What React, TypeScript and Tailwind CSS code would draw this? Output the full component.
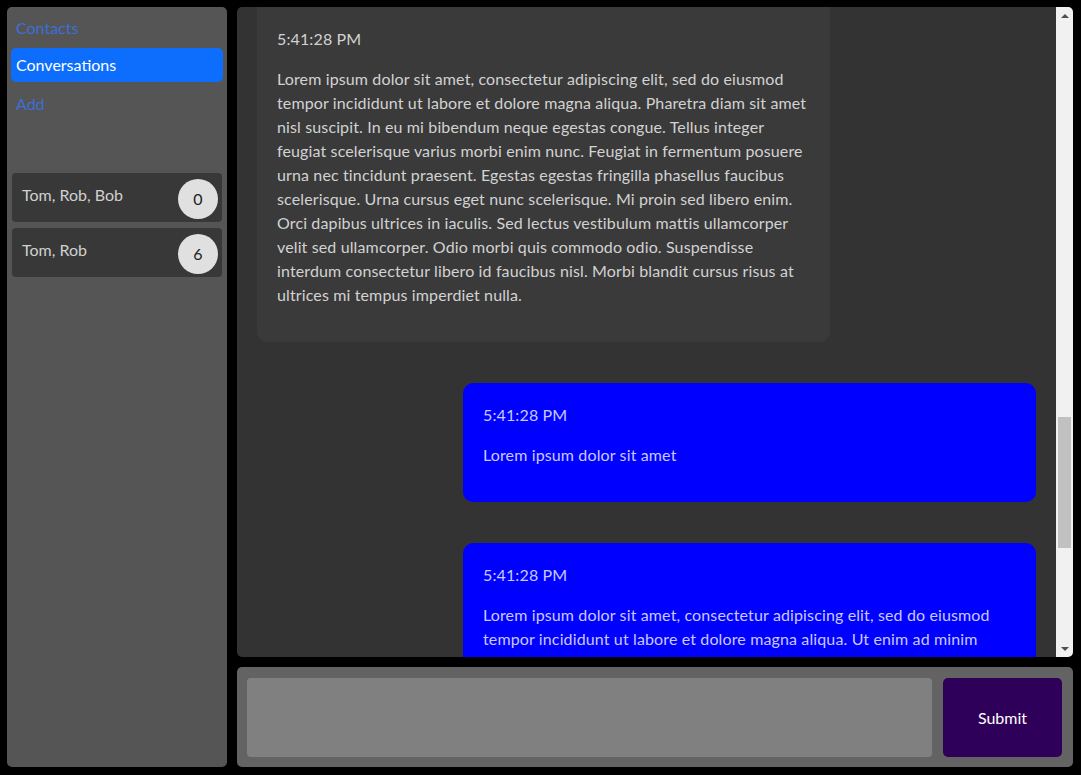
const LONG_1 =
  "Lorem ipsum dolor sit amet, consectetur adipiscing elit, sed do eiusmod tempor incididunt ut labore et dolore magna aliqua. Pharetra diam sit amet nisl suscipit. In eu mi bibendum neque egestas congue. Tellus integer feugiat scelerisque varius morbi enim nunc. Feugiat in fermentum posuere urna nec tincidunt praesent. Egestas egestas fringilla phasellus faucibus scelerisque. Urna cursus eget nunc scelerisque. Mi proin sed libero enim. Orci dapibus ultrices in iaculis. Sed lectus vestibulum mattis ullamcorper velit sed ullamcorper. Odio morbi quis commodo odio. Suspendisse interdum consectetur libero id faucibus nisl. Morbi blandit cursus risus at ultrices mi tempus imperdiet nulla.";

const LONG_2 =
  "Lorem ipsum dolor sit amet, consectetur adipiscing elit, sed do eiusmod tempor incididunt ut labore et dolore magna aliqua. Ut enim ad minim veniam, quis nostrud exercitation ullamco laboris nisi ut aliquip ex ea commodo consequat.";

const conversations = [
  { id: 1, names: "Tom, Rob, Bob", unread: 0 },
  { id: 2, names: "Tom, Rob", unread: 6 },
];

function Bubble({ mine, time, text, first }: { mine?: boolean; time: string; text: string; first?: boolean }) {
  return (
    <div
      className={`w-[573px] rounded-[10px] px-5 pb-[35px] tracking-[0.13px] ${first ? "pt-[32px]" : "pt-5"} ${
        mine ? "self-end bg-[#0000ff] text-[#c9c9ff]" : "self-start bg-[#3a3a3a] text-[#d2d2d2]"
      }`}
    >
      <div className="leading-6">{time}</div>
      <p className="mt-4 leading-6">{text}</p>
    </div>
  );
}

function Scrollbar() {
  return (
    <div className="w-[17px] shrink-0 bg-[#f1f1f1] flex flex-col items-center">
      <div className="h-[17px] flex items-center justify-center">
        <div className="w-0 h-0 border-x-[4px] border-x-transparent border-b-[4px] border-b-[#505050]" />
      </div>
      <div className="flex-1 w-full px-[2px] pt-[393px]">
        <div className="h-[131px] bg-[#c1c1c1]" />
      </div>
      <div className="h-[17px] flex items-center justify-center">
        <div className="w-0 h-0 border-x-[4px] border-x-transparent border-t-[4px] border-t-[#505050]" />
      </div>
    </div>
  );
}

export default function App() {
  return (
    <div
      className="w-[1081px] h-[775px] bg-black flex gap-[10px] pl-[7px] pr-[8px] pt-[7px] pb-[8px] text-[16px]"
      style={{ fontFamily: "Lato, 'Open Sans', sans-serif" }}
    >
      {/* Sidebar */}
      <div className="w-[220px] shrink-0 bg-[#555555] rounded-[5px] flex flex-col px-[4px] pt-[4px]">
        <a className="block h-[34px] px-[5px] leading-[34px] text-[#3d6fd6]">Contacts</a>
        <a className="block mt-[3px] h-[34px] px-[5px] leading-[34px] text-white bg-[#0d6efd] rounded-[5px]">
          Conversations
        </a>
        <a className="block mt-[5px] h-[34px] px-[5px] leading-[34px] text-[#3d6fd6]">Add</a>

        <div className="mt-[52px] flex flex-col gap-[6px] px-[1px]">
          {conversations.map((c) => (
            <div key={c.id} className="h-[49px] rounded-[4px] bg-[#383838] flex items-start justify-between pl-[10px] pr-[4px]">
              <span className="pt-[10px] leading-6 text-[#d0d0d0]">{c.names}</span>
              <span className="mt-[6px] w-[40px] h-[40px] rounded-full bg-[#e0e0e0] text-[#222] flex items-center justify-center">
                {c.unread}
              </span>
            </div>
          ))}
        </div>
      </div>

      {/* Main */}
      <div className="flex-1 flex flex-col gap-[10px] min-w-0">
        <div className="h-[650px] bg-[#333333] rounded-[5px] flex overflow-hidden">
          <div className="flex-1 overflow-hidden px-5">
            <div className="-mt-[12px] flex flex-col gap-[41px]">
              <Bubble first time="5:41:28 PM" text={LONG_1} />
              <Bubble mine time="5:41:28 PM" text="Lorem ipsum dolor sit amet" />
              <Bubble mine time="5:41:28 PM" text={LONG_2} />
            </div>
          </div>
          <Scrollbar />
        </div>

        <div className="flex-1 bg-[#636363] rounded-[5px] flex gap-[11px] pl-[10px] pr-[11px] pt-[11px] pb-[10px]">
          <textarea className="flex-1 bg-[#808080] rounded-[4px] resize-none outline-none" />
          <button className="w-[119px] bg-[#2f0059] rounded-[5px] text-white">Submit</button>
        </div>
      </div>
    </div>
  );
}
